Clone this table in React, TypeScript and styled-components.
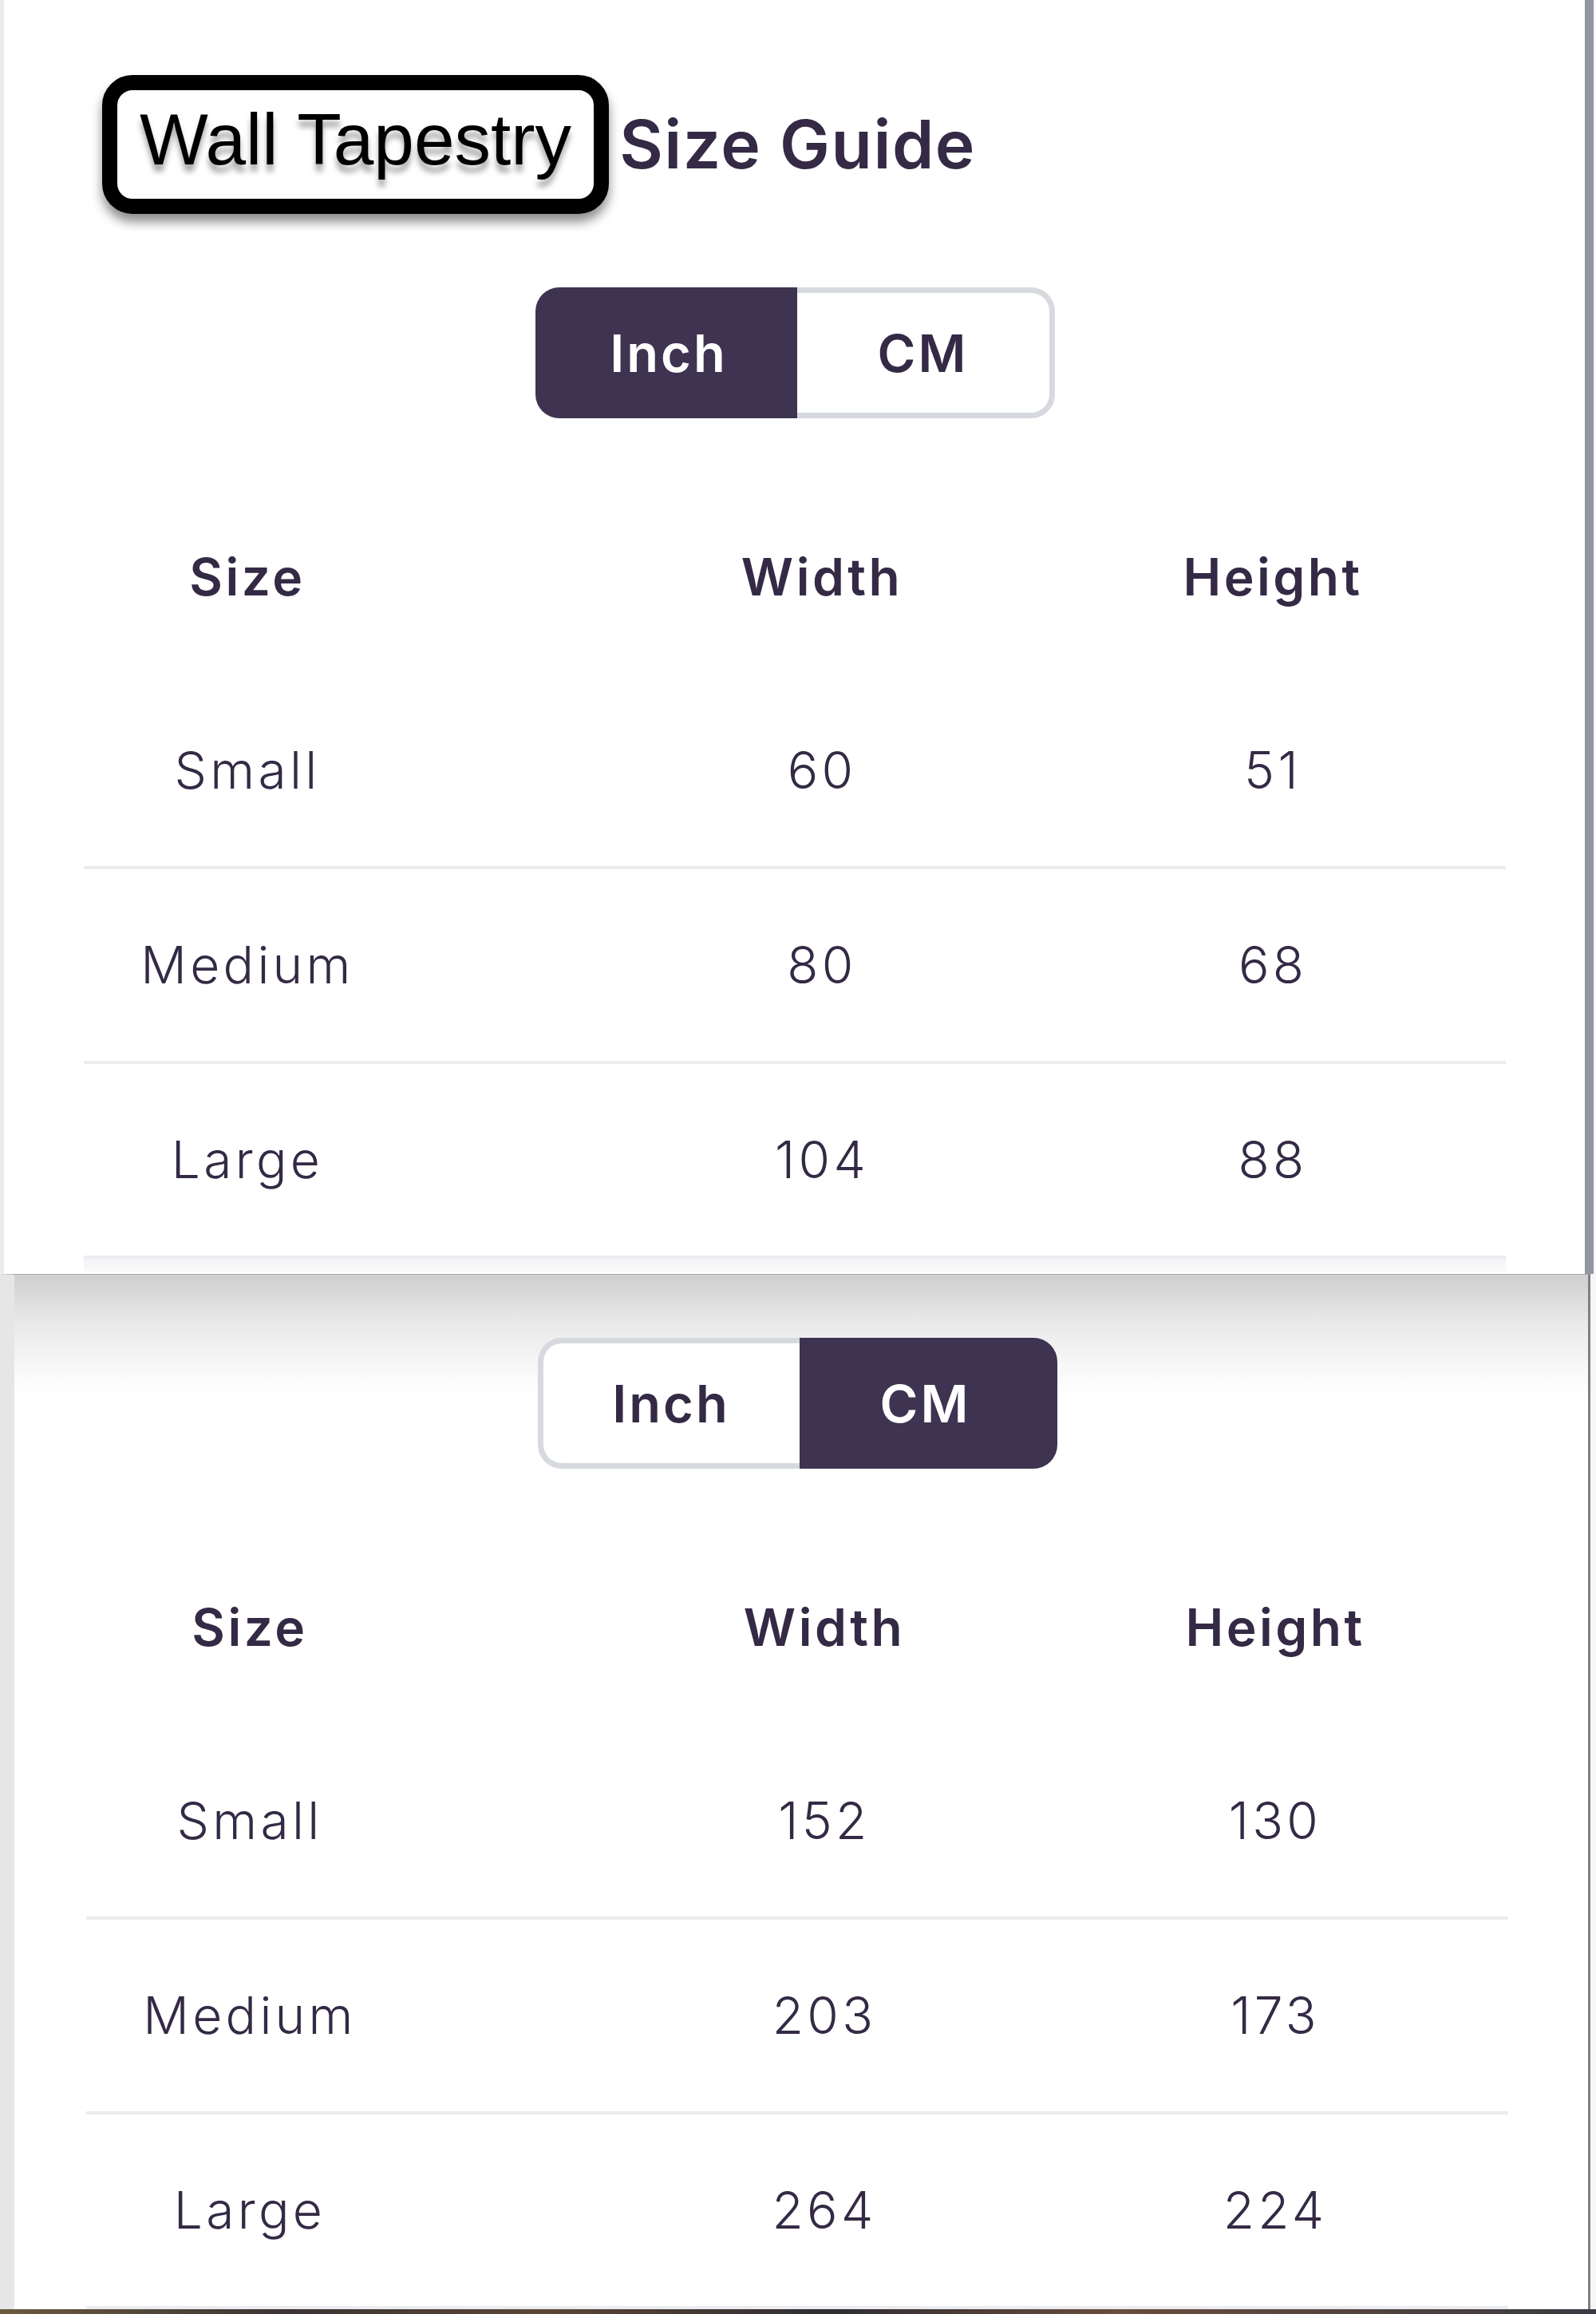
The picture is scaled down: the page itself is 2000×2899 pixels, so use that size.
import styled, {createGlobalStyle} from "styled-components"

const COLORS = {
    ink: "#342a45",
    plum: "#3e3350",
    border: "#d6d9de",
    rule: "#ececf0",
    white: "#FFFFFF",
}

type Row = {size: string, width: number, height: number}

const INCH_ROWS: Row[] = [
    {size: "Small", width: 60, height: 51},
    {size: "Medium", width: 80, height: 68},
    {size: "Large", width: 104, height: 88},
]

const CM_ROWS: Row[] = [
    {size: "Small", width: 152, height: 130},
    {size: "Medium", width: 203, height: 173},
    {size: "Large", width: 264, height: 224},
]

const GlobalStyle = createGlobalStyle`
  html, body {
    margin: 0;
    padding: 0;
    background: #ffffff;
  }
  body {
    font-family: Inter, "Noto Sans", "DejaVu Sans", sans-serif;
    color: ${COLORS.ink};
  }
  * {
    box-sizing: border-box;
  }
`

//Page

const Page = styled.main`
  display: flex;
  flex-direction: column;
  width: 2000px;
  height: 2899px;
  overflow: hidden;
  background: #f6f6f6;
`

//First capture: the modal opened at the top

const ModalShot = styled.section`
  display: flex;
  flex-direction: column;
  align-items: center;
  width: 1997px;
  height: 1596px;
  padding: 0 99px 0 100px;
  background: ${COLORS.white};
  border-left: 5px solid #ececec;
  border-right: 11px solid #9196a0;
`

//Second capture: the same modal scrolled down

const ScrolledShot = styled.section`
  display: flex;
  flex-direction: column;
  align-items: center;
  width: 1993px;
  height: 1297px;
  padding: 79px 100px 0 90px;
  background: linear-gradient(180deg, #cfcfcf 0px, #e9e9e9 60px, #fbfbfb 130px, #ffffff 150px);
  border-top: 1px solid #a9a9a9;
  border-left: 18px solid #e6e6e6;
  border-right: 3px solid #7d8089;
`

const PhotoStrip = styled.div`
  width: 100%;
  height: 6px;
  background: linear-gradient(90deg, #6b5a3e 0%, #3a3434 18%, #5c4636 34%, #2f2d33 52%, #6a4c3c 70%, #3a3a42 100%);
`

//Title

const TitleRow = styled.header`
  display: flex;
  align-items: flex-start;
  gap: 13px;
  align-self: flex-start;
  margin: 94px 0 0 23px;
`

const StickerLabel = styled.div`
  padding: 0 28px 12px;
  border: 19px solid #000000;
  border-radius: 38px;
  background: ${COLORS.white};
  box-shadow: 0 10px 14px rgba(0, 0, 0, 0.45);
  font-family: "Liberation Sans", Arial, sans-serif;
  font-size: 91px;
  line-height: 124px;
  color: #000000;
  text-shadow: 0 9px 7px rgba(0, 0, 0, 0.35);
  white-space: nowrap;
`

const Heading = styled.h1`
  margin: 37px 0 0;
  font-size: 84px;
  font-weight: 600;
  line-height: 100px;
  letter-spacing: 1.5px;
  color: ${COLORS.ink};
  white-space: nowrap;
`

//Unit switch

const Switch = styled.div<{$gap: number}>`
  display: flex;
  margin-top: ${props => props.$gap}px;
`

const SwitchButton = styled.div<{$active: boolean, $side: "left" | "right"}>`
  display: flex;
  align-items: center;
  justify-content: center;
  width: ${props => props.$side === "left" ? 328 : 323}px;
  height: 164px;
  border: 7px solid ${props => props.$active ? COLORS.plum : COLORS.border};
  ${props => props.$side === "left" ? "border-right: none;" : "border-left: none;"}
  border-radius: ${props => props.$side === "left" ? "30px 0 0 30px" : "0 30px 30px 0"};
  background: ${props => props.$active ? COLORS.plum : COLORS.white};
  color: ${props => props.$active ? COLORS.white : COLORS.ink};
  font-size: 65px;
  font-weight: 600;
  letter-spacing: 3px;
  line-height: 1;
`

//Table

const Table = styled.div`
  display: flex;
  flex-direction: column;
  width: 1782px;
  margin-top: 77px;
`

const TableRow = styled.div<{$head?: boolean}>`
  display: grid;
  grid-template-columns: 652px 546px 584px;
  align-items: center;
  height: 244px;
  border-bottom: ${props => props.$head ? "none" : `4px solid ${COLORS.rule}`};
`

const Cell = styled.div<{$head?: boolean}>`
  text-align: center;
  font-size: ${props => props.$head ? 64 : 64}px;
  font-weight: ${props => props.$head ? 600 : 300};
  letter-spacing: ${props => props.$head ? 3.5 : 4.3}px;
  color: ${COLORS.ink};
  line-height: 1;

  &:first-child {
    padding-right: 242px;
  }
`

const ScrollFade = styled.div`
  width: 1782px;
  height: 16px;
  background: linear-gradient(180deg, #f3f3f5, #fafafb);
`

function UnitSwitch({unit, gap}: {unit: "inch" | "cm", gap: number}) {
    return (
        <Switch $gap={gap}>
            <SwitchButton $side="left" $active={unit === "inch"}>Inch</SwitchButton>
            <SwitchButton $side="right" $active={unit === "cm"}>CM</SwitchButton>
        </Switch>
    )
}

function SizeTable({rows}: {rows: Row[]}) {
    return (
        <Table>
            <TableRow $head>
                <Cell $head>Size</Cell>
                <Cell $head>Width</Cell>
                <Cell $head>Height</Cell>
            </TableRow>
            {rows.map(row => (
                <TableRow key={row.size}>
                    <Cell>{row.size}</Cell>
                    <Cell>{row.width}</Cell>
                    <Cell>{row.height}</Cell>
                </TableRow>
            ))}
        </Table>
    )
}

export default function App() {
    return (
        <Page>
            <GlobalStyle/>
            <ModalShot>
                <TitleRow>
                    <StickerLabel>Wall Tapestry</StickerLabel>
                    <Heading>Size Guide</Heading>
                </TitleRow>
                <UnitSwitch unit="inch" gap={92}/>
                <SizeTable rows={INCH_ROWS}/>
                <ScrollFade/>
            </ModalShot>
            <ScrolledShot>
                <UnitSwitch unit="cm" gap={0}/>
                <SizeTable rows={CM_ROWS}/>
            </ScrolledShot>
            <PhotoStrip/>
        </Page>
    )
}
